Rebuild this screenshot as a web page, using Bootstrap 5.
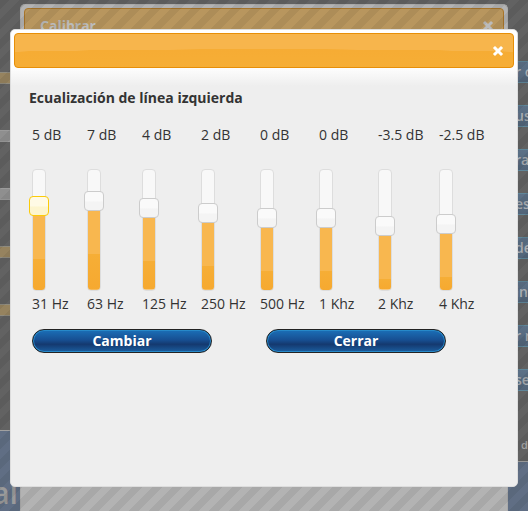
<!DOCTYPE html>
<html lang="es">
<head>
<meta charset="utf-8">
<meta name="viewport" content="width=device-width, initial-scale=1">
<title>Ecualización</title>
<link rel="stylesheet" href="https://cdn.jsdelivr.net/npm/bootstrap@5.3.0/dist/css/bootstrap.min.css">
<style>
body{font-family:"Open Sans","Trebuchet MS",sans-serif;font-size:14px;line-height:20px;color:#333;background:#626262}
.stage{display:grid;grid-template:minmax(0,1fr)/minmax(0,1fr);height:100vh;min-height:480px;overflow:hidden}
.layer{grid-area:1/1}
.strips{padding-top:72px;width:20px}
.strip{height:12px;margin-bottom:46px;background:#8f8f8f;border:solid #9b9b9b;border-width:1px 0}
.strip-tan{background:#96835f;border-color:#8f8b7e}
.panel-blue{background:#606e84;border-top:1px solid #a0a0a0}
.panel-left{width:20px;height:81px;padding-top:47px}
.panel-right{height:50px}
.big-word{display:flex;justify-content:flex-end;padding-right:2px;font-size:30px;line-height:30px;font-weight:600;color:#9a9a9a}
.side-right{width:20px}
.menu-side{padding-top:61px;gap:22px}
.menu-side a{height:22px;line-height:20px;padding-left:7px;background:linear-gradient(#5c7187,#526478);border:solid #5f8699;border-width:1px 0;color:#a9adb1;font-weight:600;white-space:nowrap;text-decoration:none}
.note{font-size:11px;color:#a5a5a5;font-weight:600;padding-left:13px;padding-bottom:6px}
.window{border:1px solid #ddd;border-radius:5px;padding:3px}
.window-back{margin:4px 20px 0;border-radius:5px 5px 0 0;border-bottom:0;background:#b3b3b3;border-color:#aaa}
.window-front{margin:29px 10px 24px;background:#eee linear-gradient(#fff 36px,#eee 56px) no-repeat}
.bar{border:1px solid #e78f08;border-radius:4px;color:#fff;height:35px;padding:0 9px 0 15px;background:radial-gradient(ellipse 100% 54% at 50% 100%,#f6ae36 0,#f6ac34 99%,transparent 100%),#f7b54c}
.window-back .bar{background:#b8965e;border-color:#a8752a;color:#bbb}
.bar button{background:none;border:0;padding:0;color:inherit}
.bar svg{display:block}
.bar h2{font-size:14px;line-height:20px;font-weight:700;margin:0}
.veil{background:linear-gradient(135deg,rgba(0,0,0,.06) 25%,transparent 25% 50%,rgba(0,0,0,.06) 50% 75%,transparent 75%) 0 0/20px 20px}
.content-area{padding:20px 15px}
.heading{font-size:14px;line-height:20px;font-weight:700;margin:0 0 17px}
.bands{display:grid;grid-template-columns:55px 55px 59px 59px 59px 59px 61px auto;padding-left:3px}
.band{white-space:nowrap}
.band label,.band output{display:block}
.slider-box{width:14px;height:122px;margin:24px 0 3px;border:1px solid #ddd;border-radius:4px;display:grid;place-content:center;background:linear-gradient(#f8b74f 53px,#f6ae36 53px,#f6a930) bottom/100% calc((var(--db) + 30)*2%) no-repeat,#f8f8f8}
.slider-box input{-webkit-appearance:none;appearance:none;width:140px;height:20px;margin:0;background:none;transform:rotate(-90deg)}
.slider-box input::-webkit-slider-thumb{-webkit-appearance:none;width:20px;height:20px;border:1px solid #ccc;border-radius:4px;background:linear-gradient(90deg,#f4f4f4 45%,#fafafa 50%)}
.slider-box .chosen::-webkit-slider-thumb{border-color:#fbcb09;background:linear-gradient(90deg,#fdf5ce 45%,#fffae5 50%)}
.actions{display:grid;grid-template-columns:180px 180px;column-gap:54px;padding:15px 0 0 3px}
.btn-pill,.btn-pill:hover{border:1px solid #222;border-radius:12px;height:24px;padding:0;line-height:20px;font-size:14px;font-weight:700;color:#fff;background:linear-gradient(#1b70b8,#174f92 45%,#14396f 65%,#1b5ea0);box-shadow:inset 0 0 0 1px #2789c9}
</style>
<script src="https://cdn.jsdelivr.net/npm/bootstrap@5.3.0/dist/js/bootstrap.bundle.min.js"></script>
</head>
<body>
<div class="stage">
  <div class="layer d-flex justify-content-between">
    <div class="d-flex flex-column justify-content-between">
      <div class="strips">
        <div class="strip strip-tan"></div><div class="strip"></div><div class="strip"></div><div class="strip strip-tan"></div><div class="strip strip-tan mb-0"></div>
      </div>
      <div class="panel-blue panel-left"><div class="big-word">al</div></div>
    </div>
    <div class="side-right d-flex flex-column justify-content-between">
      <nav class="menu-side d-flex flex-column">
        <a href="#">r c</a><a href="#">us</a><a href="#">ra</a><a href="#">es</a><a href="#">de</a><a href="#">in</a><a href="#">r r</a><a href="#">se</a>
      </nav>
      <div><div class="note">d</div><div class="panel-blue panel-right"></div></div>
    </div>
  </div>
  <section class="layer window window-back" aria-label="Calibrar">
    <div class="bar d-flex align-items-center justify-content-between">
      <h2>Calibrar</h2>
      <button type="button" aria-label="Cerrar ventana"><svg width="12" height="12" viewBox="0 0 12 12"><path d="M3 3l6 6M9 3l-6 6" stroke="currentColor" stroke-width="3" stroke-linecap="square"/></svg></button>
    </div>
  </section>
  <div class="layer veil"></div>
  <section class="layer window window-front" role="dialog" aria-labelledby="eq-title">
    <div class="bar d-flex align-items-center justify-content-end">
      <button type="button" aria-label="Cerrar ventana"><svg width="12" height="12" viewBox="0 0 12 12"><path d="M3 3l6 6M9 3l-6 6" stroke="currentColor" stroke-width="3" stroke-linecap="square"/></svg></button>
    </div>
    <div class="content-area">
      <h1 class="heading" id="eq-title">Ecualización de línea izquierda</h1>
      <div class="bands">
        <div class="band"><output for="b1">5 dB</output><div class="slider-box" style="--db:5"><input class="chosen" id="b1" type="range" min="-30" max="20" step="0.5" value="5"></div><label for="b1">31 Hz</label></div>
        <div class="band"><output for="b2">7 dB</output><div class="slider-box" style="--db:7"><input id="b2" type="range" min="-30" max="20" step="0.5" value="7"></div><label for="b2">63 Hz</label></div>
        <div class="band"><output for="b3">4 dB</output><div class="slider-box" style="--db:4"><input id="b3" type="range" min="-30" max="20" step="0.5" value="4"></div><label for="b3">125 Hz</label></div>
        <div class="band"><output for="b4">2 dB</output><div class="slider-box" style="--db:2"><input id="b4" type="range" min="-30" max="20" step="0.5" value="2"></div><label for="b4">250 Hz</label></div>
        <div class="band"><output for="b5">0 dB</output><div class="slider-box" style="--db:0"><input id="b5" type="range" min="-30" max="20" step="0.5" value="0"></div><label for="b5">500 Hz</label></div>
        <div class="band"><output for="b6">0 dB</output><div class="slider-box" style="--db:0"><input id="b6" type="range" min="-30" max="20" step="0.5" value="0"></div><label for="b6">1 Khz</label></div>
        <div class="band"><output for="b7">-3.5 dB</output><div class="slider-box" style="--db:-3.5"><input id="b7" type="range" min="-30" max="20" step="0.5" value="-3.5"></div><label for="b7">2 Khz</label></div>
        <div class="band"><output for="b8">-2.5 dB</output><div class="slider-box" style="--db:-2.5"><input id="b8" type="range" min="-30" max="20" step="0.5" value="-2.5"></div><label for="b8">4 Khz</label></div>
      </div>
      <div class="actions">
        <button type="button" class="btn btn-pill">Cambiar</button>
        <button type="button" class="btn btn-pill">Cerrar</button>
      </div>
    </div>
  </section>
</div>
</body>
</html>
